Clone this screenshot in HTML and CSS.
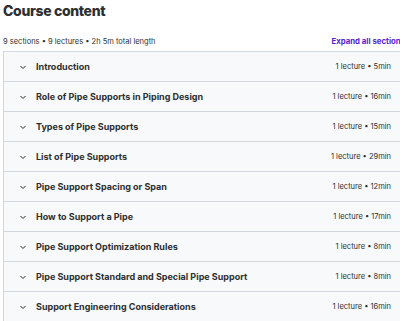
FILE: index.html
```html
<!DOCTYPE html>
<html lang="en">
  <head>
    <meta charset="UTF-8" />
    <title>Course content</title>
    <link rel="stylesheet" href="styles.css">
  </head>
  <body>
    <div class="course">
      <h2 class="course-title">Course content</h2>
      <div class="course-meta">
        <span>9 sections • 9 lectures • 2h 5m total length</span>
        <a href="#" class="expand">Expand all sections</a>
      </div>
      <div class="sections">
        <div class="section">
          <span class="chevron"><svg width="8" height="8" viewBox="0 0 8 8"><path d="M1.5 3 L4 5.5 L6.5 3" fill="none" stroke="#2d2f31" stroke-width="1"/></svg></span>
          <span class="section-name">Introduction</span>
          <span class="section-info">1 lecture • 5min</span>
        </div>
        <div class="section">
          <span class="chevron"><svg width="8" height="8" viewBox="0 0 8 8"><path d="M1.5 3 L4 5.5 L6.5 3" fill="none" stroke="#2d2f31" stroke-width="1"/></svg></span>
          <span class="section-name">Role of Pipe Supports in Piping Design</span>
          <span class="section-info">1 lecture • 16min</span>
        </div>
        <div class="section">
          <span class="chevron"><svg width="8" height="8" viewBox="0 0 8 8"><path d="M1.5 3 L4 5.5 L6.5 3" fill="none" stroke="#2d2f31" stroke-width="1"/></svg></span>
          <span class="section-name">Types of Pipe Supports</span>
          <span class="section-info">1 lecture • 15min</span>
        </div>
        <div class="section">
          <span class="chevron"><svg width="8" height="8" viewBox="0 0 8 8"><path d="M1.5 3 L4 5.5 L6.5 3" fill="none" stroke="#2d2f31" stroke-width="1"/></svg></span>
          <span class="section-name">List of Pipe Supports</span>
          <span class="section-info">1 lecture • 29min</span>
        </div>
        <div class="section">
          <span class="chevron"><svg width="8" height="8" viewBox="0 0 8 8"><path d="M1.5 3 L4 5.5 L6.5 3" fill="none" stroke="#2d2f31" stroke-width="1"/></svg></span>
          <span class="section-name">Pipe Support Spacing or Span</span>
          <span class="section-info">1 lecture • 12min</span>
        </div>
        <div class="section">
          <span class="chevron"><svg width="8" height="8" viewBox="0 0 8 8"><path d="M1.5 3 L4 5.5 L6.5 3" fill="none" stroke="#2d2f31" stroke-width="1"/></svg></span>
          <span class="section-name">How to Support a Pipe</span>
          <span class="section-info">1 lecture • 17min</span>
        </div>
        <div class="section">
          <span class="chevron"><svg width="8" height="8" viewBox="0 0 8 8"><path d="M1.5 3 L4 5.5 L6.5 3" fill="none" stroke="#2d2f31" stroke-width="1"/></svg></span>
          <span class="section-name">Pipe Support Optimization Rules</span>
          <span class="section-info">1 lecture • 8min</span>
        </div>
        <div class="section">
          <span class="chevron"><svg width="8" height="8" viewBox="0 0 8 8"><path d="M1.5 3 L4 5.5 L6.5 3" fill="none" stroke="#2d2f31" stroke-width="1"/></svg></span>
          <span class="section-name">Pipe Support Standard and Special Pipe Support</span>
          <span class="section-info">1 lecture • 8min</span>
        </div>
        <div class="section">
          <span class="chevron"><svg width="8" height="8" viewBox="0 0 8 8"><path d="M1.5 3 L4 5.5 L6.5 3" fill="none" stroke="#2d2f31" stroke-width="1"/></svg></span>
          <span class="section-name">Support Engineering Considerations</span>
          <span class="section-info">1 lecture • 16min</span>
        </div>
      </div>
    </div>
  </body>
</html>
```

FILE: styles.css
```css
body {
  margin: 0;
  padding: 0;
  background: #fff;
  color: #2d2f31;
  font-family: Inter, "Noto Sans", sans-serif;
  overflow: hidden;
}

.course {
  width: 402px;
  padding-left: 3px;
}

.course-title {
  margin: 0;
  padding-top: 1px;
  height: 30px;
  font-size: 14px;
  font-weight: 800;
  letter-spacing: -0.35px;
  line-height: 20px;
}

.course-meta {
  display: flex;
  justify-content: space-between;
  align-items: center;
  height: 20px;
  font-size: 7.5px;
  color: #2d2f31;
}

.expand {
  color: #5624d0;
  font-size: 7.8px;
  font-weight: 700;
  text-decoration: none;
  white-space: nowrap;
}

.sections {
  border: 1px solid #d1d7dc;
  border-right: none;
}

.section {
  display: flex;
  align-items: center;
  height: 29px;
  background: #f7f9fa;
  border-bottom: 1px solid #d1d7dc;
  padding: 0 14px 0 15px;
  font-size: 9px;
}

.chevron {
  display: flex;
  width: 17px;
}

.section-name {
  flex: 1;
  font-weight: 700;
}

.section-info {
  font-size: 7.5px;
  color: #2d2f31;
}
```
